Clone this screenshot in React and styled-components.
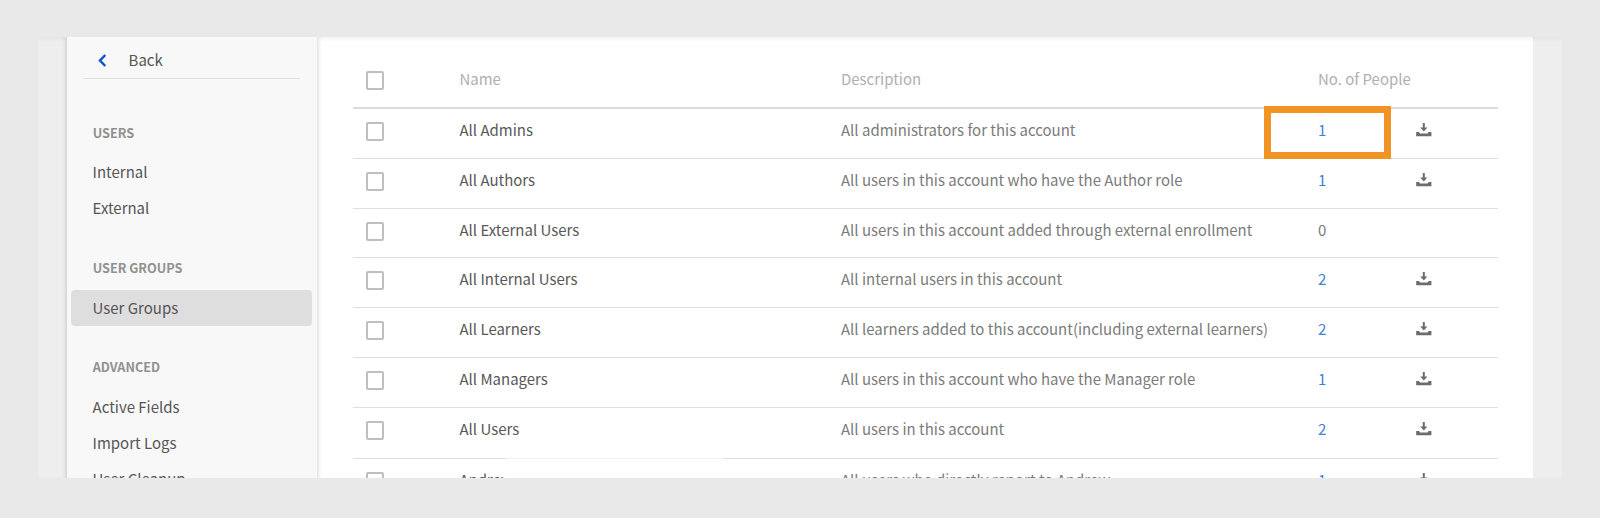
import React from "react";
import styled, { createGlobalStyle } from "styled-components";

const GlobalStyle = createGlobalStyle`
  * { box-sizing: border-box; }
  body {
    margin: 0;
    background: #e9e9e9;
    font-family: "Noto Sans CJK SC", "Noto Sans", sans-serif;
    font-size: 14.97px;
    color: #555;
  }
`;

const Page = styled.div`
  height: 518px;
  padding: 37px 38px 40px;
  background: #e9e9e9;
  overflow: hidden;
`;

const Shell = styled.div`
  position: relative;
  height: 441px;
  padding: 0 29px;
  background: #eeeeee;
  display: flex;
  overflow: hidden;

  &::after {
    content: "";
    position: absolute;
    inset: 0 0 auto;
    height: 5px;
    background: linear-gradient(rgba(0, 0, 0, 0.045), rgba(0, 0, 0, 0));
  }
`;

const Sidebar = styled.nav`
  flex: 0 0 250px;
  z-index: 1;
  height: 470px;
  padding: 0 5px 0 4px;
  background: #f8f8f8;
  box-shadow: 0 0 5px rgba(0, 0, 0, 0.22);
`;

const BackLink = styled.div`
  display: flex;
  align-items: center;
  gap: 21.6px;
  height: 42px;
  margin: 0 12px;
  padding: 3px 0 0 15px;
  border-bottom: 1px solid #e0e0e0;
`;

const BackArrow = styled.svg`
  margin-top: 2px;
  fill: none;
  stroke: #0a55d0;
  stroke-width: 2.5;
`;

const GroupTitle = styled.h2`
  margin: ${(p) => p.$top}px 0 ${(p) => p.$bottom}px;
  padding-left: 21.7px;
  line-height: 20px;
  font-size: 12.7px;
  font-weight: 700;
  color: #919191;
`;

const NavItem = styled.div`
  height: 36px;
  padding-left: 21.6px;
  line-height: 35px;
  border-radius: 4px;
  background: ${(p) => (p.$active ? "#dedede" : "transparent")};
`;

const Content = styled.main`
  flex: 1;
  height: 480px;
  padding: 13px 35px 0 36px;
  background: #fff;
`;

const Row = styled.div`
  position: relative;
  display: grid;
  grid-template-columns: 106.5px 381.5px 477px 98.3px 1fr;
  height: ${(p) => p.$height || 50}px;
  border-bottom: 1px solid #dfdfdf;
  line-height: 26px;
  padding-top: 8px;
  white-space: nowrap;
`;

const HeaderRow = styled(Row)`
  height: 59px;
  padding-top: 16px;
  border-bottom: 2px solid #dcdcdc;
  color: #afafaf;
`;

const Checkbox = styled.span`
  width: 18.5px;
  height: 19px;
  margin: 5px 0 0 12.6px;
  border: 2px solid #bfbfbf;
  border-radius: 2px;
  background: #fff;
`;

const Name = styled.span`
  color: #585858;
`;

const Description = styled.span`
  color: #7b7b7b;
`;

const Count = styled.span`
  color: ${(p) => (p.$link ? "#3e80d8" : "#7b7b7b")};
`;

const DownloadSvg = styled.svg`
  display: block;
  margin-top: 6px;
  fill: #6c6c6c;
`;

const Highlight = styled.div`
  position: absolute;
  top: -3px;
  left: 911px;
  width: 127px;
  height: 53px;
  border: 7px solid #f29423;
`;

const Mask = styled.div`
  position: absolute;
  top: -1px;
  left: 153px;
  width: 217px;
  height: 30px;
  background: #fff;
  border-top: 1px solid #f1f1f1;
`;

function DownloadIcon() {
  return (
    <DownloadSvg width="16" height="14" viewBox="0 0 16 14">
      <path d="M6.8 0h2v4.6h2.6L7.8 8.5 4.2 4.6h2.6z" />
      <path d="M0.2 9h2.8l1 1.5h7.6l1-1.5h2.8v4.2H0.2z" />
    </DownloadSvg>
  );
}

const groups = [
  ["All Admins", "All administrators for this account", 1],
  ["All Authors", "All users in this account who have the Author role", 1],
  ["All External Users", "All users in this account added through external enrollment", 0, 49],
  ["All Internal Users", "All internal users in this account", 2],
  ["All Learners", "All learners added to this account(including external learners)", 2],
  ["All Managers", "All users in this account who have the Manager role", 1],
  ["All Users", "All users in this account", 2, 51],
  ["Andrew", "All users who directly report to Andrew", 1],
];

export default function App() {
  return (
    <>
      <GlobalStyle />
      <Page>
        <Shell>
          <Sidebar>
            <BackLink>
              <BackArrow width="9" height="13" viewBox="0 0 9 13">
                <path d="M7.3 1 2 6.5l5.3 5.5" />
              </BackArrow>
              Back
            </BackLink>
            <GroupTitle $top={44} $bottom={11}>USERS</GroupTitle>
            <NavItem>Internal</NavItem>
            <NavItem>External</NavItem>
            <GroupTitle $top={32} $bottom={12}>USER GROUPS</GroupTitle>
            <NavItem $active>User Groups</NavItem>
            <GroupTitle $top={31} $bottom={12}>ADVANCED</GroupTitle>
            <NavItem>Active Fields</NavItem>
            <NavItem>Import Logs</NavItem>
            <NavItem>User Cleanup</NavItem>
          </Sidebar>
          <Content>
            <HeaderRow>
              <Checkbox />
              <span>Name</span>
              <span>Description</span>
              <span>No. of People</span>
            </HeaderRow>
            {groups.map(([name, description, count, height], i) => (
              <Row key={name} $height={height}>
                <Checkbox />
                <Name>{name}</Name>
                <Description>{description}</Description>
                <Count $link={count > 0}>{count}</Count>
                {count > 0 && <DownloadIcon />}
                {i === 0 && <Highlight />}
                {i === groups.length - 1 && <Mask />}
              </Row>
            ))}
          </Content>
        </Shell>
      </Page>
    </>
  );
}
